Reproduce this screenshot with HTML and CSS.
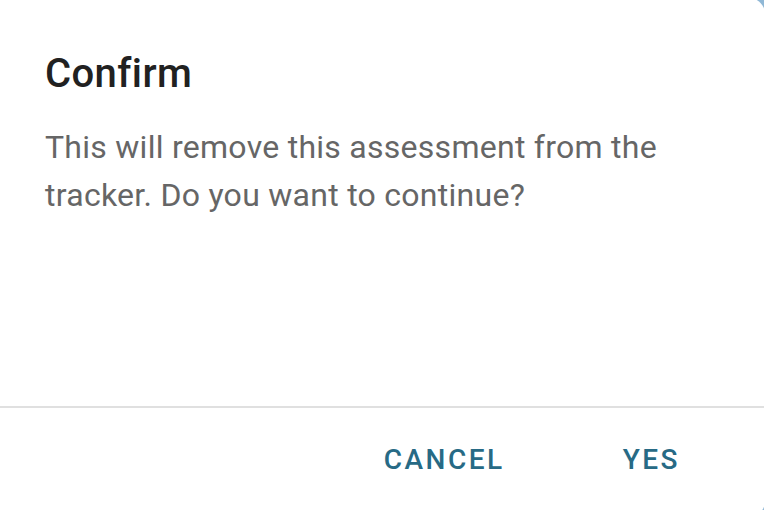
FILE: index.html
```html
<!DOCTYPE html>
<html lang="en">
<head>
    <meta charset="UTF-8">
    <meta name="viewport" content="width=device-width, initial-scale=1.0">
    <title>Confirm</title>
    <link rel="stylesheet" href="styles.css">
</head>
<body>
    <div class="dialog">
        <div class="dialog-content">
            <h2 class="dialog-title">Confirm</h2>
            <p class="dialog-text">This will remove this assessment from the tracker. Do you want to continue?</p>
        </div>
        <div class="dialog-actions">
            <button class="action">Cancel</button>
            <button class="action">Yes</button>
        </div>
    </div>
</body>
</html>
```

FILE: styles.css
```css
html, body {
    margin: 0;
    height: 100%;
    overflow: hidden;
}
body {
    background-color: #90b8d6;
    font-family: Roboto, "Liberation Sans", sans-serif;
}
.dialog {
    display: flex;
    flex-direction: column;
    width: 775px;
    height: 519px;
    margin-top: -2px;
    margin-left: -10px;
    background-color: #fff;
    border-radius: 16px;
}
.dialog-content {
    height: 408px;
    box-sizing: border-box;
    padding: 44px 57px 0 55px;
}
.dialog-title {
    margin: 0;
    font-size: 40px;
    font-weight: 500;
    line-height: 64px;
    letter-spacing: 0.4px;
    color: #212121;
}
.dialog-text {
    margin: 17px 0 0 0;
    font-size: 32px;
    line-height: 48px;
    letter-spacing: 0.27px;
    color: #666;
}
.dialog-actions {
    display: flex;
    justify-content: flex-end;
    gap: 54px;
    padding: 34px 53px 0 0;
    border-top: 2px solid #e0e0e0;
}
.action {
    padding: 0 32px;
    border: none;
    background: none;
    font-family: Roboto, "Liberation Sans", sans-serif;
    font-size: 28px;
    font-weight: 500;
    line-height: 36px;
    letter-spacing: 2.5px;
    text-transform: uppercase;
    color: #276a85;
    cursor: pointer;
}
```
